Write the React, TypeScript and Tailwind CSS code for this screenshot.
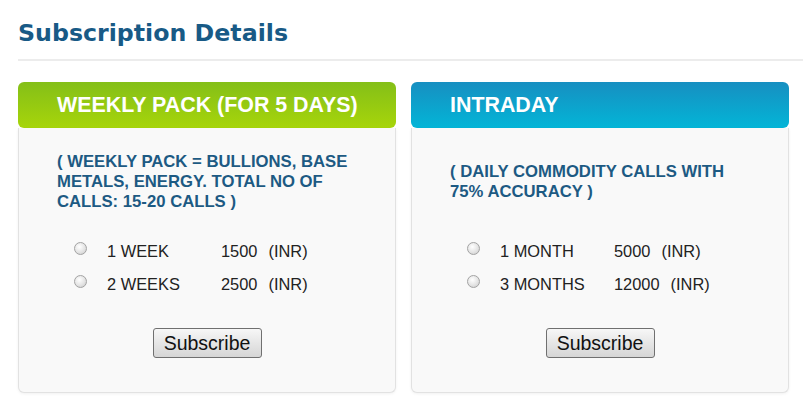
import React from "react";

type Opt = { label: string; price: string };

function Radio() {
  return (
    <span className="mb-[6px] inline-block h-[13px] w-[13px] shrink-0 rounded-full border border-[#a3a3a3] bg-[radial-gradient(circle_at_40%_35%,#ffffff_0%,#e4e4e4_55%,#c9c9c9_100%)]" />
  );
}

function Card({
  title,
  desc,
  options,
  headerClass,
}: {
  title: string;
  desc: string;
  options: Opt[];
  headerClass: string;
}) {
  return (
    <div className="flex w-[378px] flex-col">
      <div
        className={`flex h-[46px] items-center rounded-[6px] pl-[39px] text-[21.4px] font-bold text-white ${headerClass}`}
        style={{ fontFamily: '"Liberation Sans", Arial, sans-serif' }}
      >
        {title}
      </div>
      <div
        className="flex h-[265px] flex-col rounded-b-[6px] border-x border-b border-[#e2e2e2] bg-[#f9f9f9] shadow-[0_1px_3px_rgba(0,0,0,0.06)]"
        style={{ fontFamily: '"Liberation Sans", Arial, sans-serif' }}
      >
        <div className="flex h-[107px] items-center px-[38px]">
          <p className="text-[16.7px] font-bold leading-[20px] text-[#1d5a83]">{desc}</p>
        </div>
        <div className="flex flex-col">
          {options.map((o) => (
            <div key={o.label} className="flex h-[33px] items-center pl-[55px] text-[16.4px] text-[#222]">
              <Radio />
              <span className="ml-[20px] w-[114px]">{o.label}</span>
              <span>{o.price}</span>
              <span className="ml-[11px]">(INR)</span>
            </div>
          ))}
        </div>
        <div className="mt-[27px] flex justify-center">
          <button className="h-[30px] w-[109px] rounded-[3px] border border-[#707070] bg-[linear-gradient(#f7f7f7,#e6e6e6_50%,#d6d6d6)] text-[19.5px] text-[#111]">
            Subscribe
          </button>
        </div>
      </div>
    </div>
  );
}

export default function App() {
  return (
    <div className="min-h-[407px] w-[803px] bg-white">
      <div className="pl-[18px]">
        <h1
          className="pt-[19px] text-[23.7px] font-bold leading-[28px] text-[#185a86]"
          style={{ fontFamily: '"DejaVu Sans", Verdana, sans-serif' }}
        >
          Subscription Details
        </h1>
        <div className="mt-[12px] h-[2px] bg-[#ececec]" />
        <div className="mt-[21px] flex gap-[15px]">
          <Card
            title="WEEKLY PACK (FOR 5 DAYS)"
            desc="( WEEKLY PACK = BULLIONS, BASE METALS, ENERGY. TOTAL NO OF CALLS: 15-20 CALLS )"
            headerClass="bg-[linear-gradient(#84bf18,#a7d50a)]"
            options={[
              { label: "1 WEEK", price: "1500" },
              { label: "2 WEEKS", price: "2500" },
            ]}
          />
          <Card
            title="INTRADAY"
            desc="( DAILY COMMODITY CALLS WITH 75% ACCURACY )"
            headerClass="bg-[linear-gradient(#178fc1,#03b5d7)]"
            options={[
              { label: "1 MONTH", price: "5000" },
              { label: "3 MONTHS", price: "12000" },
            ]}
          />
        </div>
      </div>
    </div>
  );
}
